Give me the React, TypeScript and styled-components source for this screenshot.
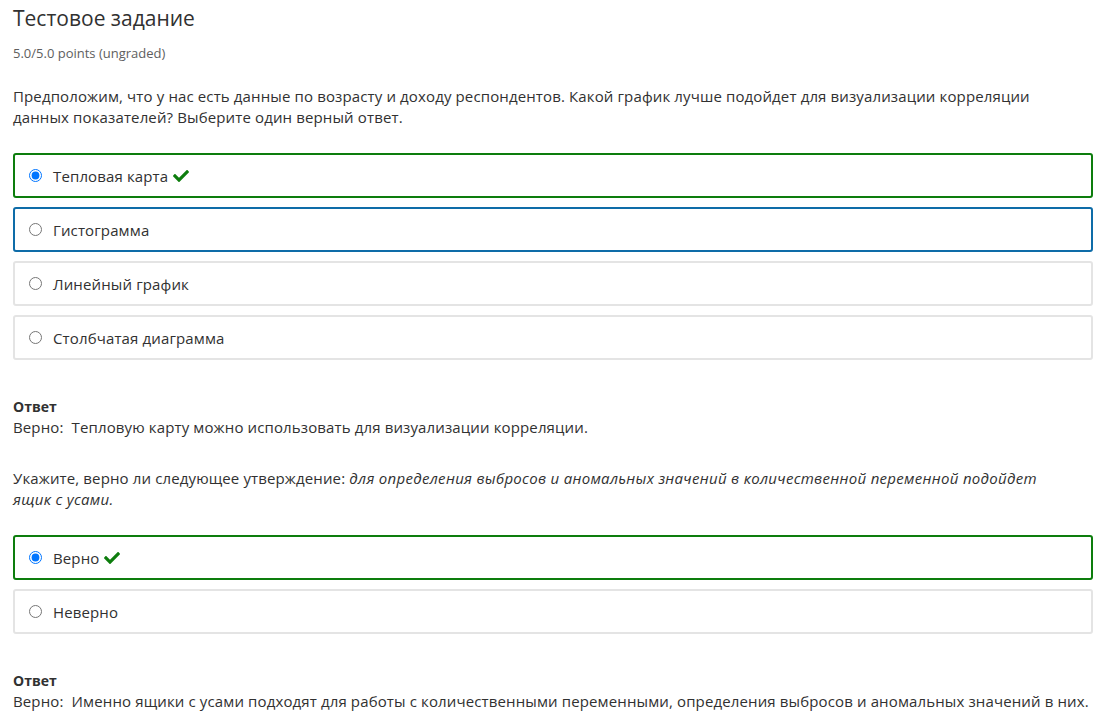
import styled, { createGlobalStyle } from 'styled-components';
import { FaCheck } from 'react-icons/fa';

const GlobalStyle = createGlobalStyle`
  body {
    margin: 0;
    background: #fff;
    font-family: 'Open Sans', 'Noto Sans', sans-serif;
    color: #313131;
  }
`;

const Page = styled.div`
  padding: 2px 6px 0 13px;
`;
const Title = styled.h2`
  margin: 0;
  font-size: 21px;
  font-weight: 400;
  line-height: 32px;
  color: #313131;
`;
const Points = styled.div`
  margin-top: 10px;
  font-size: 13px;
  line-height: 18px;
  color: #5e5e5e;
`;
const Question = styled.p<{ $top?: number }>`
  margin: ${p => p.$top ?? 24}px 0 25px;
  padding-right: 45px;
  font-size: 15px;
  line-height: 21px;
  letter-spacing: 0.13px;
`;
const Statement = styled.em`
  letter-spacing: 0.3px;
`;
const Options = styled.div`
  display: flex;
  flex-direction: column;
  gap: 9px;
`;
const Option = styled.label<{ $state?: 'correct' | 'focus' }>`
  display: flex;
  align-items: center;
  gap: 8px;
  height: 45px;
  box-sizing: border-box;
  padding: 0 12px;
  border: 2px solid
    ${p => (p.$state === 'correct' ? '#0d7d0d' : p.$state === 'focus' ? '#0e6ca8' : '#e4e4e4')};
  border-radius: 3px;
  font-size: 15px;
  letter-spacing: 0.13px;
  color: #313131;
`;
const Radio = styled.input`
  margin: 0 3px 0 2px;
  width: 13px;
  height: 13px;
`;
const Check = styled(FaCheck)`
  color: #0d7d0d;
  font-size: 16px;
  margin-left: -3px;
`;
const Answer = styled.div`
  margin-top: 36px;
  font-size: 15px;
  line-height: 21px;
  letter-spacing: 0.13px;
`;
const AnswerLabel = styled.div`
  font-size: 14px;
  font-weight: 700;
  letter-spacing: 0;
`;

type Item = { text: string; checked?: boolean; state?: 'correct' | 'focus' };

const Group = ({ name, items }: { name: string; items: Item[] }) => (
  <Options>
    {items.map(item => (
      <Option key={item.text} $state={item.state}>
        <Radio type="radio" name={name} defaultChecked={item.checked} />
        {item.text}
        {item.state === 'correct' && <Check />}
      </Option>
    ))}
  </Options>
);

const App = () => {
  return (
    <Page>
      <GlobalStyle />
      <Title>Тестовое задание</Title>
      <Points>5.0/5.0 points (ungraded)</Points>
      <Question>
        Предположим, что у нас есть данные по возрасту и доходу респондентов. Какой график лучше подойдет для
        визуализации корреляции данных показателей? Выберите один верный ответ.
      </Question>
      <Group
        name="q1"
        items={[
          { text: 'Тепловая карта', checked: true, state: 'correct' },
          { text: 'Гистограмма', state: 'focus' },
          { text: 'Линейный график' },
          { text: 'Столбчатая диаграмма' },
        ]}
      />
      <Answer>
        <AnswerLabel>Ответ</AnswerLabel>
        Верно:&nbsp; Тепловую карту можно использовать для визуализации корреляции.
      </Answer>
      <Question $top={30}>
        Укажите, верно ли следующее утверждение:{' '}
        <Statement>
          для определения выбросов и аномальных значений в количественной переменной подойдет ящик с усами.
        </Statement>
      </Question>
      <Group
        name="q2"
        items={[
          { text: 'Верно', checked: true, state: 'correct' },
          { text: 'Неверно' },
        ]}
      />
      <Answer>
        <AnswerLabel>Ответ</AnswerLabel>
        Верно:&nbsp; Именно ящики с усами подходят для работы с количественными переменными, определения выбросов
        и аномальных значений в них.
      </Answer>
    </Page>
  );
};

export default App;
